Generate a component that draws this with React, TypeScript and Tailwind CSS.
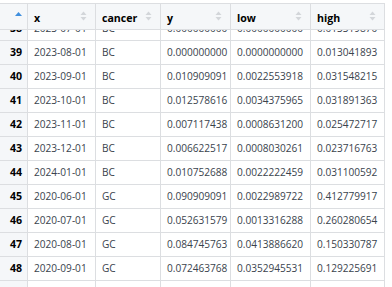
import type { ReactNode } from "react";

type Row = {
  n: number;
  x: string;
  cancer: string;
  y: string;
  low: string;
  high: string;
};

const rows: Row[] = [
  { n: 38, x: "2023-07-01", cancer: "BC", y: "0.000000000", low: "0.0000000000", high: "0.013319870" },
  { n: 39, x: "2023-08-01", cancer: "BC", y: "0.000000000", low: "0.0000000000", high: "0.013041893" },
  { n: 40, x: "2023-09-01", cancer: "BC", y: "0.010909091", low: "0.0022553918", high: "0.031548215" },
  { n: 41, x: "2023-10-01", cancer: "BC", y: "0.012578616", low: "0.0034375965", high: "0.031891363" },
  { n: 42, x: "2023-11-01", cancer: "BC", y: "0.007117438", low: "0.0008631200", high: "0.025472717" },
  { n: 43, x: "2023-12-01", cancer: "BC", y: "0.006622517", low: "0.0008030261", high: "0.023716763" },
  { n: 44, x: "2024-01-01", cancer: "BC", y: "0.010752688", low: "0.0022222459", high: "0.031100592" },
  { n: 45, x: "2020-06-01", cancer: "GC", y: "0.090909091", low: "0.0022989722", high: "0.412779917" },
  { n: 46, x: "2020-07-01", cancer: "GC", y: "0.052631579", low: "0.0013316288", high: "0.260280654" },
  { n: 47, x: "2020-08-01", cancer: "GC", y: "0.084745763", low: "0.0413886620", high: "0.150330787" },
  { n: 48, x: "2020-09-01", cancer: "GC", y: "0.072463768", low: "0.0352945531", high: "0.129225691" },
];

const cols = [
  { key: "x", label: "x", w: "w-[68px]" },
  { key: "cancer", label: "cancer", w: "w-[65px]" },
  { key: "y", label: "y", w: "w-[70px]" },
  { key: "low", label: "low", w: "w-[80px]" },
  { key: "high", label: "high", w: "w-[74px]" },
] as const;

function SortIcon() {
  return (
    <svg width="7" height="10" viewBox="0 0 7 10" className="mt-[7px] shrink-0">
      <path d="M3.5 0.5 L6.5 4 L0.5 4 Z" fill="#d3d6da" />
      <path d="M3.5 9.5 L6.5 6 L0.5 6 Z" fill="#d3d6da" />
    </svg>
  );
}

function Cell({ w, children }: { w: string; children?: ReactNode }) {
  return (
    <div className={`${w} shrink-0 h-full flex items-center pl-[6px] border-r border-[#dcdee1] whitespace-nowrap overflow-hidden`}>
      {children}
    </div>
  );
}

export default function App() {
  return (
    <div
      className="w-[392px] h-[287px] bg-white overflow-hidden text-[10.1px] text-[#3a434d]"
      style={{ fontFamily: '"Open Sans", "Noto Sans", sans-serif' }}
    >
      <div className="h-[3px] bg-white" />
      {/* header */}
      <div className="relative z-10 flex h-[27px] w-[385px] bg-[#f5f7f9] border-t border-b border-[#dcdee1]">
        <div className="w-[28px] shrink-0 h-full border-r border-[#dcdee1] flex justify-end pr-[5px]">
          <svg width="7" height="4" viewBox="0 0 7 4" className="mt-[8px]">
            <path d="M3.5 0 L7 4 L0 4 Z" fill="#3f8fde" />
          </svg>
        </div>
        {cols.map(c => (
          <div
            key={c.key}
            className={`${c.w} shrink-0 h-full border-r border-[#dcdee1] flex justify-between pl-[6px] pr-[8px]`}
          >
            <span className="font-bold text-[10.6px] text-black leading-none mt-[9px]">{c.label}</span>
            <SortIcon />
          </div>
        ))}
      </div>
      {/* body, scrolled so row 38 sits half under the header */}
      <div className="-mt-[13px]">
        {rows.map(r => (
          <div key={r.n} className="flex h-[24px] w-[385px] border-b border-[#dcdee1]">
            <div className="w-[28px] shrink-0 h-full bg-[#f5f7f9] border-r border-[#dcdee1] flex items-center justify-end pr-[5px] font-bold text-[10.6px] text-black">
              {r.n}
            </div>
            <Cell w="w-[68px]">{r.x}</Cell>
            <Cell w="w-[65px]">{r.cancer}</Cell>
            <Cell w="w-[70px]">{r.y}</Cell>
            <Cell w="w-[80px]">{r.low}</Cell>
            <Cell w="w-[74px]">{r.high}</Cell>
          </div>
        ))}
        {/* next row, only its top edge is in view */}
        <div className="flex h-[24px] w-[385px]">
          <div className="w-[28px] shrink-0 h-full bg-[#f5f7f9] border-r border-[#dcdee1]" />
          <Cell w="w-[68px]" />
          <Cell w="w-[65px]" />
          <Cell w="w-[70px]" />
          <Cell w="w-[80px]" />
          <Cell w="w-[74px]" />
        </div>
      </div>
    </div>
  );
}
